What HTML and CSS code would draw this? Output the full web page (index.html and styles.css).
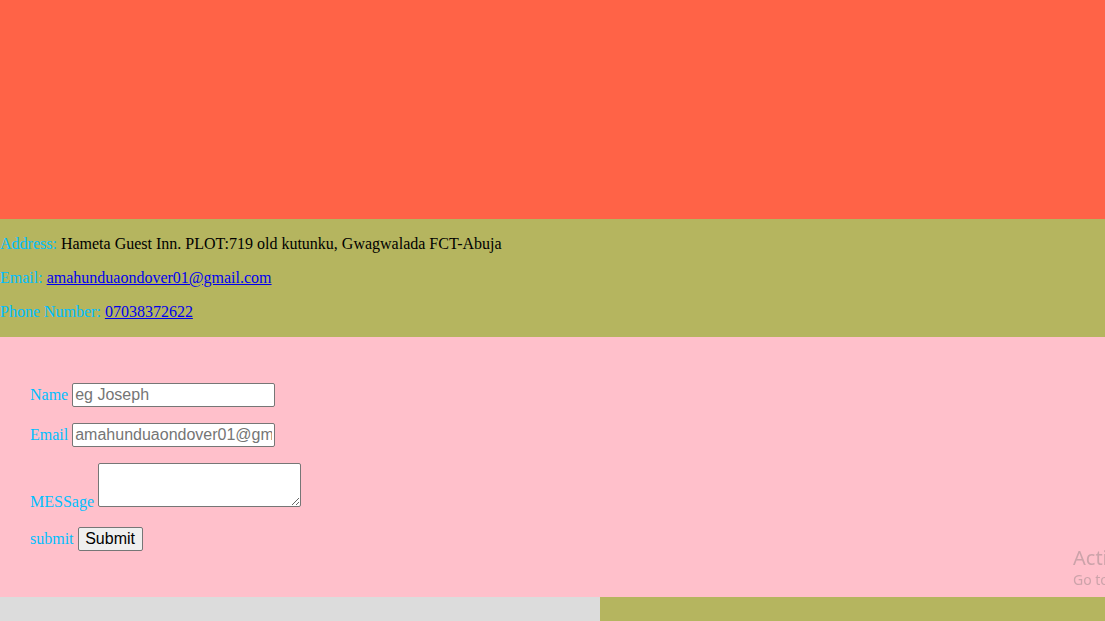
FILE: index.html
```
<!DOCTYPE html>
<html lang="en">
<head>
<meta charset="utf-8">
<title>Contact</title>
<link rel="stylesheet" href="styles.css">
</head>
<body>
<header class="hero"></header>
<section class="info">
  <p><span class="lbl">Address:</span> Hameta Guest Inn. PLOT:719 old kutunku, Gwagwalada FCT-Abuja</p>
  <p><span class="lbl">Email:</span> <a href="#">amahunduaondover01@gmail.com</a></p>
  <p><span class="lbl">Phone Number:</span> <a href="#">07038372622</a></p>
</section>
<section class="contact">
  <form class="form">
    <p class="row"><label class="lbl">Name</label> <input class="field" type="text" placeholder="eg Joseph"></p>
    <p class="row"><label class="lbl">Email</label> <input class="field" type="email" placeholder="amahunduaondover01@gmail.com"></p>
    <p class="row"><label class="lbl">MESSage</label> <textarea class="msg"></textarea></p>
    <p class="row"><label class="lbl">submit</label> <button class="btn" type="button">Submit</button></p>
  </form>
</section>
<footer class="foot">
  <div class="foot-left"></div>
  <div class="foot-right"></div>
</footer>
<div class="watermark">
  <div class="wm-title">Activate Windows</div>
  <div class="wm-sub">Go to Settings to activate Windows.</div>
</div>
</body>
</html>
```
FILE: styles.css
```
html, body {
  margin: 0;
  padding: 0;
  overflow: hidden;
}
body {
  font-family: "Liberation Serif", "Times New Roman", serif;
  font-size: 16px;
  color: #000;
}
.hero {
  height: 219px;
  background: #ff6347;
}
.info {
  background: #b5b55f;
  display: flow-root;
}
.info p {
  margin: 16px 0;
  line-height: 18px;
}
.lbl {
  color: #00bfff;
}
.info a {
  color: #0000ee;
}
.contact {
  background: #ffc0cb;
  padding: 30px;
  height: 200px;
}
.form {
  display: flow-root;
}
.row {
  margin: 16px 0;
}
.field {
  box-sizing: border-box;
  width: 203px;
  height: 24px;
  font-family: "Liberation Sans", Arial, sans-serif;
  font-size: 16px;
  padding: 1px 2px;
  border: 1px solid #767676;
  border-radius: 2px;
  margin: 0;
}
.field::placeholder {
  color: #757575;
}
.msg {
  box-sizing: border-box;
  width: 203px;
  height: 44px;
  border: 1px solid #767676;
  border-radius: 2px;
  margin: 0;
  vertical-align: baseline;
}
.btn {
  box-sizing: border-box;
  font-family: "Liberation Sans", Arial, sans-serif;
  font-size: 16px;
  width: 65px;
  height: 24px;
  padding: 1px 6px;
  border: 1px solid #767676;
  border-radius: 2px;
  background: #efefef;
  color: #000;
  margin: 0;
}
.foot {
  display: flex;
  height: 24px;
}
.foot-left {
  width: 600px;
  background: #dcdcdc;
}
.foot-right {
  flex: 1;
  background: #b5b55f;
}
.watermark {
  position: fixed;
  left: 1073px;
  top: 546px;
  white-space: nowrap;
  font-family: "Noto Sans", "Open Sans", sans-serif;
  color: rgba(110, 110, 110, 0.35);
}
.wm-title {
  font-size: 20px;
  line-height: 24px;
}
.wm-sub {
  font-size: 14px;
  line-height: 20px;
}
```
